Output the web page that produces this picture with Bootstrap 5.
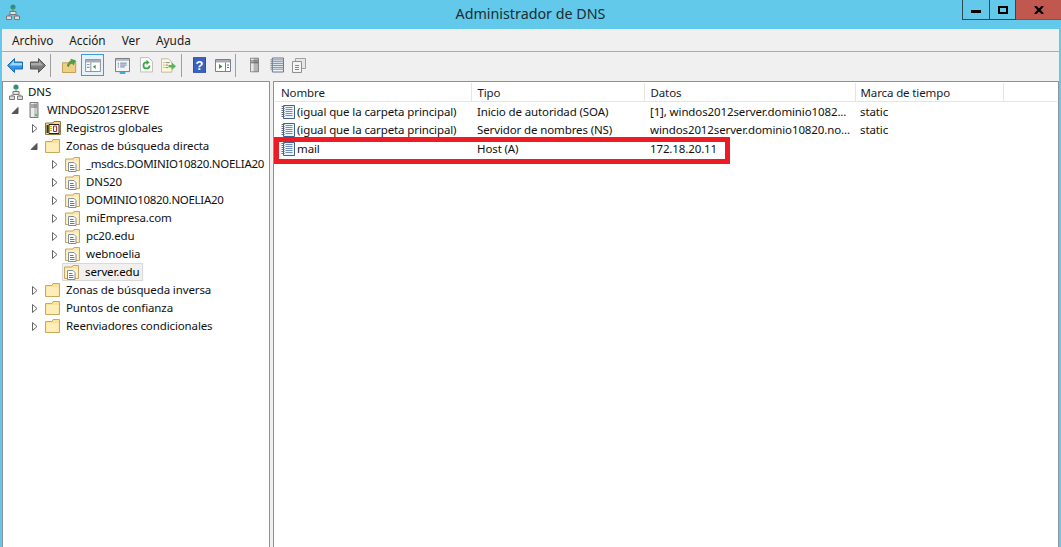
<!DOCTYPE html>
<html lang="es">
<head>
  <meta charset="UTF-8" />
  <meta name="viewport" content="width=device-width, initial-scale=1" />
  <title>Administrador de DNS</title>
  <link href="https://cdn.jsdelivr.net/npm/bootstrap@5.3.3/dist/css/bootstrap.min.css" rel="stylesheet" />
  <style>
    html, body { height: 100%; }
    body {
      font-family: "Noto Sans", "Open Sans", sans-serif;
      font-size: 11.5px;
      letter-spacing: -0.12px;
      line-height: 18px;
      color: #000;
      background: #63c9ea;
      overflow: hidden;
    }
    svg { display: block; flex: none; }
    .ventana { height: 547px; padding: 0 2px; }
    .barra-titulo { height: 29px; }
    .titulo-txt { font-size: 14.3px; letter-spacing: 0; color: #1c2c34; left: 0; right: 0; top: 5px; line-height: 18px; }
    .icono-app { left: 5px; top: 4px; }
    .ctrl-ventana { right: 0; top: 0; height: 20px; }
    .ctrl { height: 20px; border: 1px solid #2b4a58; border-top: 0; }
    .ctrl-min { width: 28px; }
    .ctrl-max { width: 26px; border-left: 0; }
    .ctrl-cerrar { width: 45px; background: #c1584f; border-bottom: 1px solid #8f4a44; }
    .menu-bar { height: 23px; background: #f0f0f0; border-bottom: 1px solid #a9adb3; padding-left: 10px; gap: 16px; font-size: 11.8px; letter-spacing: 0; color: #1a1a1a; }
    .tool-bar { height: 29px; background: #f0f0f0; padding: 0 0 3px 5px; }
    .t-sep { width: 1px; height: 23px; background: #a0a0a0; }
    .t-activo { width: 23px; height: 22px; background: #e6f2fa; border: 1px solid #3c9bd8; }
    .mi-4 { margin-left: 4px; }
    .mi-5 { margin-left: 5px; }
    .mi-7 { margin-left: 7px; }
    .mi-8 { margin-left: 8px; }
    .mi-9 { margin-left: 9px; }
    .mi-10 { margin-left: 10px; }
    .mi-11 { margin-left: 11px; }
    .mi-14 { margin-left: 14px; }
    .paneles { height: 466px; background: #f0f0f0; }
    .panel-arbol { flex: none; width: 268px; background: #fff; border: 1px solid #8e9196; border-bottom: 0; padding-top: 1px; }
    .panel-lista { flex: 1; min-width: 0; margin-left: 3px; background: #fff; border: 1px solid #8e9196; border-bottom: 0; padding: 1px 1px 0 1px; }
    .nodo { height: 18px; white-space: nowrap; }
    .nodo span { margin-left: 5px; color: #111; }
    .nodo span.mayus { letter-spacing: -0.3px; }
    .niv0 { padding-left: 5px; }
    .niv0 span { margin-left: 4px; }
    .niv1 { padding-left: 7px; }
    .niv2 { padding-left: 26px; }
    .niv3 { padding-left: 46px; }
    .flecha { width: 11px; height: 18px; margin-right: 5px; }
    .nodo-sel { background: #f0f0f0; outline: 1px solid #d9d9d9; outline-offset: -1px; margin-left: 59px; width: 81px; padding-left: 2px; height: 18px; }
    .nodo-sel span { margin-left: 5px; }
    .tabla-dns { table-layout: fixed; width: 782px; border-collapse: collapse; margin: 0; }
    .tabla-dns th { font-weight: 400; height: 18px; padding: 1px 0 0 6px; border-right: 1px solid #e5e5e5; border-bottom: 1px solid #e5e5e5; color: #1a1a2a; line-height: 17px; white-space: nowrap; }
    .tabla-dns th:nth-child(4) { padding-left: 5px; }
    .tabla-dns th:last-child { border-right: 0; }
    .tabla-dns td { padding: 0 0 0 6px; height: 18.5px; line-height: 18px; white-space: nowrap; color: #111; }
    .tabla-dns td:nth-child(4) { padding-left: 5px; }
    .tabla-dns tbody tr:first-child td { padding-top: 1px; height: 19.5px; }
    .celda-nom { display: flex; align-items: center; gap: 1px; }
    .tabla-dns td.col-nom { padding-left: 5px; }
    .marco-rojo { left: 274px; top: 137px; width: 456px; height: 27px; border: 5px solid #ed1c24; pointer-events: none; }
  </style>
</head>
<body>

<svg width="0" height="0" class="position-absolute">
  <defs>
    <symbol id="i-dns" viewBox="0 0 16 16">
      <circle cx="8" cy="3" r="2.6" fill="#3f9a4a"/><path d="M6 2.500 8 1l2 1-1 2H7z" fill="#2f7fc8"/>
      <path d="M7.500 5.500h1V9h-1z" fill="#777"/><path d="M5 7.500h6v3H5z" fill="#e4e4e4" stroke="#777"/>
      <path d="M1.500 12h5v3.500h-5zM9.500 12h5v3.500h-5z" fill="#ddd" stroke="#777"/><path d="M4 10.500v1.500M12 10.500v1.500" stroke="#777"/>
    </symbol>
    <symbol id="i-servidor" viewBox="0 0 16 16">
      <path d="M4 .5h8v15H4z" fill="#c9c9c9" stroke="#7d7d7d"/><path d="M5 1h3v14H5z" fill="#ececec"/>
      <path d="M5 3h6M5 5h6" stroke="#666"/><path d="M9 12h2v2H9z" fill="#5cc05c"/>
    </symbol>
    <symbol id="i-carpeta" viewBox="0 0 16 16">
      <path d="M.5 3.500V14.500h14V1.500H8l-1 2z" fill="#fbe29a" stroke="#c9a95a"/><path d="M1.500 5h12v9h-12z" fill="#fdedb9"/>
    </symbol>
    <symbol id="i-zona" viewBox="0 0 16 16">
      <path d="M.5 3V14.500h14V1.500H9l-1 1.500z" fill="#fbe6a8" stroke="#c6a763"/><path d="M1.500 4.500h12V14h-12z" fill="#fff2c9"/>
      <path d="M3.500 6.500h5.500l2 2v7h-7.500z" fill="#fff" stroke="#7f8ea3"/><path d="M5 9.500h3.500M5 11.500h4.500M5 13.500h4.500" stroke="#5b7da8"/>
    </symbol>
    <symbol id="i-globales" viewBox="0 0 16 16">
      <path d="M.5 3V14.500h15V1.500H9l-1 1.500z" fill="#f6dc8c" stroke="#8a7a3f"/>
      <path d="M4 4.500h10v9H4z" fill="#fff" stroke="#222"/><path d="M5 6h2v1H5zM5 8h2v1H5zM5 10h2v1H5z" fill="#d8b400"/>
      <path d="M8.500 6v5.500h3V6z" fill="#f4f4ff" stroke="#c2262e"/><path d="M1.500 5h2v8h-2z" fill="#333"/>
    </symbol>
    <symbol id="i-reg" viewBox="0 0 16 16">
      <path d="M3.500 1.500h11v13h-11z" fill="#eef4fb" stroke="#44608f"/>
      <path d="M5.500 3.500h7M5.500 5.500h7M5.500 7.500h7M5.500 9.500h7M5.500 11.500h7" stroke="#6f8fb8"/>
      <path d="M1.500 2.500h3M1.500 4.500h3M1.500 6.500h3M1.500 8.500h3M1.500 10.500h3M1.500 12.500h3" stroke="#5a6a80"/>
    </symbol>
    <symbol id="i-abierto" viewBox="0 0 11 18"><path d="M8 6.500v6H2z" fill="#555" stroke="#555"/></symbol>
    <symbol id="i-cerrado" viewBox="0 0 11 18"><path d="M3.500 5.500v8l4.500-4z" fill="#fff" stroke="#666"/></symbol>
  </defs>
</svg>

<div class="ventana position-relative">
  <!-- Barra de titulo -->
  <div class="barra-titulo">
    <svg class="icono-app position-absolute" width="16" height="16"><use href="#i-dns"/></svg>
    <div class="titulo-txt position-absolute text-center">Administrador de DNS</div>
    <div class="ctrl-ventana position-absolute d-flex">
      <div class="ctrl ctrl-min d-flex justify-content-center align-items-center">
        <svg width="10" height="3" class="mt-1"><rect width="10" height="3" fill="#000"/></svg>
      </div>
      <div class="ctrl ctrl-max d-flex justify-content-center align-items-center">
        <svg width="10" height="8"><rect x="1" y="1" width="8" height="6" fill="none" stroke="#000" stroke-width="2"/></svg>
      </div>
      <div class="ctrl-cerrar d-flex justify-content-center align-items-center">
        <svg width="10" height="8"><path d="M1 0 9 8M9 0 1 8" stroke="#000" stroke-width="2.200"/></svg>
      </div>
    </div>
  </div>

  <!-- Menu -->
  <div class="menu-bar d-flex align-items-center">
    <span>Archivo</span><span>Acción</span><span>Ver</span><span>Ayuda</span>
  </div>

  <!-- Barra de herramientas -->
  <div class="tool-bar d-flex align-items-center">
    <svg width="16" height="15" viewBox="0 0 16 15"><path d="M.5 7.500 7.500.500V4h8v7h-8v3.500z" fill="#2f95ea" stroke="#1c6cb4"/><path d="M7 2.500V5h8v2.500H2.500z" fill="#a5d8f8"/></svg>
    <svg width="16" height="15" viewBox="0 0 16 15" class="mi-7"><path d="M15.500 7.500 8.500.500V4h-8v7h8v3.500z" fill="#7a7a7a" stroke="#555"/><path d="M9 2.500V5H1v2.500h12z" fill="#aaa"/></svg>
    <div class="t-sep mi-4"></div>
    <svg width="15" height="16" viewBox="0 0 17 18" class="mi-11"><path d="M.5 6.500v11h15v-13H9l-1 2z" fill="#f0cf80" stroke="#b89650"/><path d="M6 10C7 6 9 5 11 5L10 2.500 15 4l-2 5-1-2C10 7 8 8 7.500 11z" fill="#4ca64c" stroke="#2c7c2c" stroke-width=".6"/></svg>
    <div class="t-activo mi-4 d-flex justify-content-center align-items-center">
      <svg width="16" height="13" viewBox="0 0 18 15"><path d="M.5.500h17v14H.5z" fill="#fff" stroke="#7a8088"/><path d="M1 1h16v3H1z" fill="#a8adb4"/><path d="M6.500 4v10" stroke="#7a8088"/><path d="M2 6h3v1H2zM2 9h3v1H2z" fill="#4a7bb5"/><path d="M12 6.500v5L9 9z" fill="#2f9a3f"/></svg>
    </div>
    <svg width="15" height="17" viewBox="0 0 16 18" class="mi-11"><path d="M.5 1.500h15v14H.5z" fill="#f4f4f4" stroke="#70757c"/><path d="M1 2h14v2H1z" fill="#b4b8bd"/><path d="M3 6h1v1H3zM3 8h1v1H3zM3 10h1v1H3z" fill="#4a6a95"/><path d="M5.500 6.500h7M5.500 8.500h7M5.500 10.500h5" stroke="#5d7fa8"/><path d="M5 16h6v2H5z" fill="#3ca0e0"/></svg>
    <svg width="13" height="16" viewBox="0 0 15 18" class="mi-10"><path d="M.5.500H10l4.500 4.500v12H.5z" fill="#fff" stroke="#b5b5b5"/><path d="M12 9.500A4.500 4.500 0 1 1 7.500 5V3l3.500 3-3.500 3V7a2.500 2.500 0 1 0 2.500 2.500z" fill="#3da543"/></svg>
    <svg width="15" height="15" viewBox="0 0 18 17" class="mi-8"><path d="M.5.500H9l4 4v12H.5z" fill="#fdf8dc" stroke="#b5b08f"/><path d="M3 5h1M3 8h1M3 11h1" stroke="#555"/><path d="M5.500 5h5M5.500 8h3M5.500 11h3" stroke="#6a7a92"/><path d="M9 8h4V5l5 4.500-5 4.500v-3H9z" fill="#59b659"/></svg>
    <div class="t-sep mi-5"></div>
    <svg width="13" height="16" viewBox="0 0 14 17" class="mi-11"><path d="M0 0h14v17H0z" fill="#2a4ea8"/><path d="M1 1h12v15H1z" fill="#3c62c0"/><text x="7" y="13.500" text-anchor="middle" font-family="Liberation Sans, sans-serif" font-weight="700" font-size="14" fill="#fff">?</text></svg>
    <svg width="16" height="13" viewBox="0 0 16 13" class="mi-9"><path d="M.5.500h15v12H.5z" fill="#fff" stroke="#7a8088"/><path d="M1 1h14v2.500H1z" fill="#a8adb4"/><path d="M10.500 3.500v9" stroke="#7a8088"/><path d="M4 5v5l3.500-2.500z" fill="#2f9a3f"/><path d="M12 5.500h2v1h-2zM12 8h2v1h-2z" fill="#4a7bb5"/></svg>
    <div class="t-sep mi-4"></div>
    <svg width="9" height="16" viewBox="0 0 10 16" class="mi-14"><path d="M.5.500h9v15h-9z" fill="#b5b5b5" stroke="#777"/><path d="M1 1h3v14H1z" fill="#e8e8e8"/><path d="M1 3.500h8M1 5.500h8" stroke="#555"/></svg>
    <svg width="14" height="16" viewBox="0 0 15 16" class="mi-11"><path d="M2.500.500h12v15h-12z" fill="#f2f4f6" stroke="#5d6d85"/><path d="M.5 2.500h14M.5 4.500h14M.5 6.500h14M.5 8.500h14M.5 10.500h14M.5 12.500h14" stroke="#7188a5"/></svg>
    <svg width="14" height="15" viewBox="0 0 14 15" class="mi-8"><path d="M3.500.500h10v10h-10z" fill="#e6e6e6" stroke="#a0a0a0"/><path d="M.5 3.500h9v11h-9z" fill="#f4f4f4" stroke="#909090"/><path d="M3 7.500h4M3 9.500h4M3 11.500h4" stroke="#888"/></svg>
  </div>

  <div class="paneles d-flex">
    <!-- Arbol -->
    <div class="panel-arbol">
      <div class="nodo niv0 d-flex align-items-center"><svg width="16" height="16"><use href="#i-dns"/></svg><span>DNS</span></div>
      <div class="nodo niv1 d-flex align-items-center"><svg class="flecha"><use href="#i-abierto"/></svg><svg width="16" height="16"><use href="#i-servidor"/></svg><span class="mayus">WINDOS2012SERVE</span></div>
      <div class="nodo niv2 d-flex align-items-center"><svg class="flecha"><use href="#i-cerrado"/></svg><svg width="16" height="16"><use href="#i-globales"/></svg><span>Registros globales</span></div>
      <div class="nodo niv2 d-flex align-items-center"><svg class="flecha"><use href="#i-abierto"/></svg><svg width="16" height="16"><use href="#i-carpeta"/></svg><span>Zonas de búsqueda directa</span></div>
      <div class="nodo niv3 d-flex align-items-center"><svg class="flecha"><use href="#i-cerrado"/></svg><svg width="16" height="16"><use href="#i-zona"/></svg><span class="mayus">_msdcs.DOMINIO10820.NOELIA20</span></div>
      <div class="nodo niv3 d-flex align-items-center"><svg class="flecha"><use href="#i-cerrado"/></svg><svg width="16" height="16"><use href="#i-zona"/></svg><span>DNS20</span></div>
      <div class="nodo niv3 d-flex align-items-center"><svg class="flecha"><use href="#i-cerrado"/></svg><svg width="16" height="16"><use href="#i-zona"/></svg><span class="mayus">DOMINIO10820.NOELIA20</span></div>
      <div class="nodo niv3 d-flex align-items-center"><svg class="flecha"><use href="#i-cerrado"/></svg><svg width="16" height="16"><use href="#i-zona"/></svg><span>miEmpresa.com</span></div>
      <div class="nodo niv3 d-flex align-items-center"><svg class="flecha"><use href="#i-cerrado"/></svg><svg width="16" height="16"><use href="#i-zona"/></svg><span>pc20.edu</span></div>
      <div class="nodo niv3 d-flex align-items-center"><svg class="flecha"><use href="#i-cerrado"/></svg><svg width="16" height="16"><use href="#i-zona"/></svg><span>webnoelia</span></div>
      <div class="nodo-sel d-flex align-items-center"><svg width="16" height="16"><use href="#i-zona"/></svg><span>server.edu</span></div>
      <div class="nodo niv2 d-flex align-items-center"><svg class="flecha"><use href="#i-cerrado"/></svg><svg width="16" height="16"><use href="#i-carpeta"/></svg><span>Zonas de búsqueda inversa</span></div>
      <div class="nodo niv2 d-flex align-items-center"><svg class="flecha"><use href="#i-cerrado"/></svg><svg width="16" height="16"><use href="#i-carpeta"/></svg><span>Puntos de confianza</span></div>
      <div class="nodo niv2 d-flex align-items-center"><svg class="flecha"><use href="#i-cerrado"/></svg><svg width="16" height="16"><use href="#i-carpeta"/></svg><span>Reenviadores condicionales</span></div>
    </div>

    <!-- Lista de registros -->
    <div class="panel-lista">
      <table class="tabla-dns">
        <colgroup><col width="196"><col width="173"><col width="211"><col width="148"><col></colgroup>
        <thead>
          <tr><th>Nombre</th><th>Tipo</th><th>Datos</th><th>Marca de tiempo</th><th></th></tr>
        </thead>
        <tbody>
          <tr><td class="col-nom"><div class="celda-nom"><svg width="16" height="16"><use href="#i-reg"/></svg>(igual que la carpeta principal)</div></td><td>Inicio de autoridad (SOA)</td><td>[1], windos2012server.dominio1082...</td><td>static</td><td></td></tr>
          <tr><td class="col-nom"><div class="celda-nom"><svg width="16" height="16"><use href="#i-reg"/></svg>(igual que la carpeta principal)</div></td><td>Servidor de nombres (NS)</td><td>windos2012server.dominio10820.no...</td><td>static</td><td></td></tr>
          <tr><td class="col-nom"><div class="celda-nom"><svg width="16" height="16"><use href="#i-reg"/></svg>mail</div></td><td>Host (A)</td><td>172.18.20.11</td><td></td><td></td></tr>
        </tbody>
      </table>
    </div>
  </div>

  <div class="marco-rojo position-absolute"></div>
</div>

<script src="https://cdn.jsdelivr.net/npm/bootstrap@5.3.3/dist/js/bootstrap.bundle.min.js"></script>
</body>
</html>
